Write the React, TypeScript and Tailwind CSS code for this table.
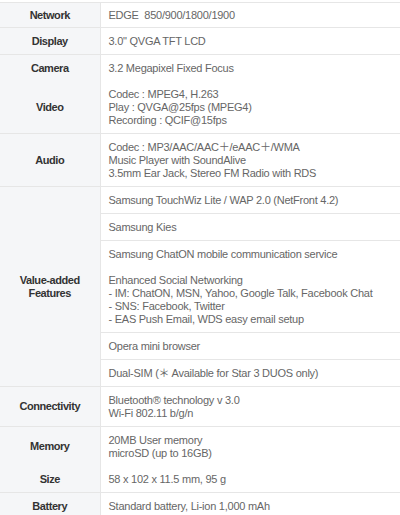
import React from 'react';

type Row = { label?: React.ReactNode; span?: number; lines: string[]; noBorder?: boolean };

const rows: Row[] = [
  { label: 'Network', lines: ['EDGE\u00a0 850/900/1800/1900'] },
  { label: 'Display', lines: ['3.0" QVGA TFT LCD'] },
  { label: 'Camera', lines: ['3.2 Megapixel Fixed Focus'], noBorder: true },
  { label: 'Video', lines: ['Codec : MPEG4, H.263', 'Play : QVGA@25fps (MPEG4)', 'Recording : QCIF@15fps'] },
  {
    label: 'Audio',
    lines: ['Codec : MP3/AAC/AAC\uff0b/eAAC\uff0b/WMA', 'Music Player with SoundAlive', '3.5mm Ear Jack, Stereo FM Radio with RDS'],
  },
  {
    label: (
      <>
        Value-added
        <br />
        Features
      </>
    ),
    span: 5,
    lines: ['Samsung TouchWiz Lite / WAP 2.0 (NetFront 4.2)'],
  },
  { lines: ['Samsung Kies'] },
  {
    lines: [
      'Samsung ChatON mobile communication service',
      '\u00a0',
      'Enhanced Social Networking',
      '- IM: ChatON, MSN, Yahoo, Google Talk, Facebook Chat',
      '- SNS: Facebook, Twitter',
      '- EAS Push Email, WDS easy email setup',
    ],
  },
  { lines: ['Opera mini browser'] },
  { lines: ['Dual-SIM (\uff0a Available for Star 3 DUOS only)'] },
  { label: 'Connectivity', lines: ['Bluetooth\u00ae technology v 3.0', 'Wi-Fi 802.11 b/g/n'] },
  { label: 'Memory', lines: ['20MB User memory', 'microSD (up to 16GB)'], noBorder: true },
  { label: 'Size', lines: ['58 x 102 x 11.5 mm, 95 g'] },
  { label: 'Battery', lines: ['Standard battery, Li-ion 1,000 mAh'] },
];

export default function App() {
  return (
    <div className="w-[400px] h-[515px] overflow-hidden bg-white pt-[2px] font-['Liberation_Sans','Noto_Sans_CJK_KR',Arial,sans-serif] text-[11px] leading-[13px]">
      <table className="w-full border-collapse border-t border-[#e6e6e6]">
        <tbody>
          {rows.map((r, i) => {
            const pad = i === 0 ? 'py-[5.5px]' : 'py-[6.5px]';
            return (
              <tr key={i} className={r.noBorder ? '' : 'border-b border-[#e6e6e6]'}>
                {r.label !== undefined && (
                  <th
                    rowSpan={r.span}
                    className={`w-[100px] bg-[#f5f6f8] border-r border-[#e6e6e6] px-1 ${pad} text-center align-middle font-bold tracking-[-0.45px] text-[#333]`}
                  >
                    {r.label}
                  </th>
                )}
                <td className={`pl-2 pr-1 ${pad} text-left align-middle tracking-[-0.25px] text-[#666]`}>
                  {r.lines.map((l, j) => (
                    <div key={j}>{l}</div>
                  ))}
                </td>
              </tr>
            );
          })}
        </tbody>
      </table>
    </div>
  );
}
